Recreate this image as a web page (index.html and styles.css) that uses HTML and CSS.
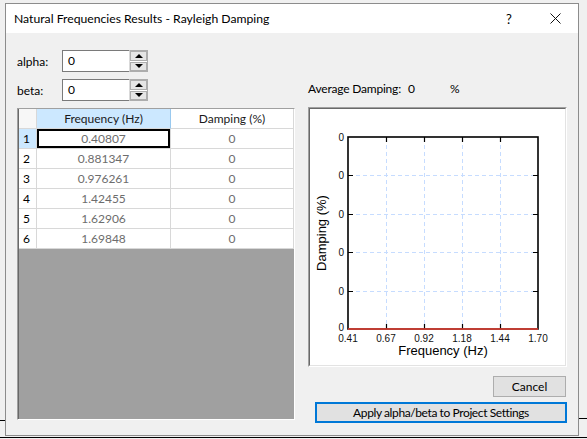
FILE: index.html
```html
<!DOCTYPE html>
<html lang="en">
<head>
  <meta charset="UTF-8">
  <title>Natural Frequencies Results - Rayleigh Damping</title>
  <link rel="stylesheet" href="styles.css">
</head>
<body>

  <div class="window">
    <!-- Barra de titulo -->
    <div class="titlebar">
      <span class="title">Natural Frequencies Results - Rayleigh Damping</span>
      <span class="tb-btn">?</span>
      <span class="tb-btn">
        <svg width="11" height="11" viewBox="0 0 11 11"><path d="M0.5 0.5 L10.5 10.5 M10.5 0.5 L0.5 10.5" stroke="#111" stroke-width="1"/></svg>
      </span>
    </div>

    <div class="client">
      <div class="left">
        <div class="field">
          <span class="field-label">alpha:</span>
          <div class="spin">
            <div class="spin-text">0</div>
            <div class="spin-btns">
              <div class="spin-btn"><span class="arrow-up"></span></div>
              <div class="spin-btn"><span class="arrow-down"></span></div>
            </div>
          </div>
        </div>
        <div class="field">
          <span class="field-label">beta:</span>
          <div class="spin">
            <div class="spin-text">0</div>
            <div class="spin-btns">
              <div class="spin-btn"><span class="arrow-up"></span></div>
              <div class="spin-btn"><span class="arrow-down"></span></div>
            </div>
          </div>
        </div>

        <!-- Tabla de resultados -->
        <div class="grid">
          <div class="grid-inner">
            <div class="grid-row head">
              <div class="cell corner"></div>
              <div class="cell head-sel">Frequency (Hz)</div>
              <div class="cell">Damping (%)</div>
            </div>
            <div class="grid-row">
              <div class="cell num num-sel">1</div>
              <div class="cell val current">0.40807</div>
              <div class="cell val">0</div>
            </div>
            <div class="grid-row">
              <div class="cell num">2</div>
              <div class="cell val">0.881347</div>
              <div class="cell val">0</div>
            </div>
            <div class="grid-row">
              <div class="cell num">3</div>
              <div class="cell val">0.976261</div>
              <div class="cell val">0</div>
            </div>
            <div class="grid-row">
              <div class="cell num">4</div>
              <div class="cell val">1.42455</div>
              <div class="cell val">0</div>
            </div>
            <div class="grid-row">
              <div class="cell num">5</div>
              <div class="cell val">1.62906</div>
              <div class="cell val">0</div>
            </div>
            <div class="grid-row">
              <div class="cell num">6</div>
              <div class="cell val">1.69848</div>
              <div class="cell val">0</div>
            </div>
          </div>
        </div>
      </div>

      <div class="right">
        <div class="avg">
          <span class="avg-label">Average Damping:</span>
          <span class="avg-val">0</span>
          <span>%</span>
        </div>

        <!-- Grafico -->
        <div class="chart">
          <div class="chart-inner">
            <svg width="255" height="256" viewBox="0 0 255 256">
              <g stroke="#c6dcff" stroke-width="1" stroke-dasharray="4 3">
                <path d="M76.5 29 V220 M114.5 29 V220 M152.5 29 V220 M190.5 29 V220"/>
                <path d="M39 66.5 H228 M39 105.5 H228 M39 143.5 H228 M39 182.5 H228"/>
              </g>
              <g stroke="#000" stroke-width="1.2">
                <path d="M76.5 28 V33 M114.5 28 V33 M152.5 28 V33 M190.5 28 V33"/>
                <path d="M76.5 220 V215 M114.5 220 V215 M152.5 220 V215 M190.5 220 V215"/>
                <path d="M38 66.5 H43 M38 105.5 H43 M38 143.5 H43 M38 182.5 H43"/>
                <path d="M228 66.5 H223 M228 105.5 H223 M228 143.5 H223 M228 182.5 H223"/>
              </g>
              <rect x="38" y="28" width="190" height="192" fill="none" stroke="#000" stroke-width="1.6"/>
              <path d="M38 220 H228" stroke="#ef4336" stroke-width="1.6"/>
              <g class="tick-label" text-anchor="end">
                <text x="34" y="31.5">0</text>
                <text x="34" y="70">0</text>
                <text x="34" y="108.5">0</text>
                <text x="34" y="147">0</text>
                <text x="34" y="185.5">0</text>
                <text x="34" y="222">0</text>
              </g>
              <g class="tick-label" text-anchor="middle">
                <text x="38" y="233">0.41</text>
                <text x="76" y="233">0.67</text>
                <text x="114" y="233">0.92</text>
                <text x="152" y="233">1.18</text>
                <text x="190" y="233">1.44</text>
                <text x="228" y="233">1.70</text>
              </g>
              <text class="axis-title" x="133" y="246" text-anchor="middle">Frequency (Hz)</text>
              <text class="axis-title" text-anchor="middle" transform="translate(16 124) rotate(-90)">Damping (%)</text>
            </svg>
          </div>
        </div>

        <div class="cancel-row">
          <button class="btn">Cancel</button>
        </div>
        <button class="btn btn-default">Apply alpha/beta to Project Settings</button>
      </div>
    </div>
  </div>

</body>
</html>
```

FILE: styles.css
```css
body {
  margin: 0;
  padding: 3px 0 0 5px;
  font-family: Lato, "Liberation Sans", sans-serif;
  font-size: 12px;
  color: #000;
  background-color: #f0f0f0;
  /* lineas de la ventana de fondo */
  background-image:
    linear-gradient(#000, #000),
    linear-gradient(#000, #000),
    linear-gradient(#000, #000);
  background-size: 100% 1px, 9px 1px, 5px 1px;
  background-position: 0 437px, 578px 418px, 0 420px;
  background-repeat: no-repeat;
  height: 436px;
  overflow: hidden;
}

.window {
  width: 574px;
  height: 433px;
  box-sizing: border-box;
  border: 1px solid #8c8c8c;
  background: #f0f0f0;
  display: flex;
  flex-direction: column;
}

.titlebar {
  height: 29px;
  background: #fff;
  display: flex;
  align-items: center;
}

.title {
  flex: 1;
  padding-left: 8px;
  font-size: 12.2px;
  color: #000;
  white-space: nowrap;
}

.tb-btn {
  width: 46px;
  height: 29px;
  display: flex;
  align-items: center;
  justify-content: center;
  font-size: 13px;
}

.client {
  flex: 1;
  display: flex;
  padding: 17px 0 0 11px;
}

.left {
  width: 278px;
}

.field {
  display: flex;
  align-items: center;
  height: 22px;
  margin-bottom: 7px;
}

.field-label {
  width: 45px;
}

.spin {
  display: flex;
  width: 86px;
  height: 22px;
}

.spin-text {
  flex: 1;
  background: #fff;
  border: 1px solid #7a7a7a;
  border-right: none;
  padding-left: 5px;
  line-height: 20px;
}

.spin-btns {
  width: 17px;
  display: flex;
  flex-direction: column;
  gap: 1px;
  background: #fff;
  border: 1px solid #adadad;
  border-left: 1px solid #d9d9d9;
}

.spin-btn {
  flex: 1;
  background: #e5e5e5;
  border: 1px solid #adadad;
  display: flex;
  align-items: center;
  justify-content: center;
}

.arrow-up,
.arrow-down {
  width: 0;
  height: 0;
  border-left: 4px solid transparent;
  border-right: 4px solid transparent;
}

.arrow-up {
  border-bottom: 4px solid #000;
}

.arrow-down {
  border-top: 4px solid #000;
}

/* Tabla */
.grid {
  height: 312px;
  box-sizing: border-box;
  border: 1px solid;
  border-color: #a0a0a0 #fff #fff #a0a0a0;
}

.grid-inner {
  height: 100%;
  box-sizing: border-box;
  border-left: 1px solid #696969;
  background: #a0a0a0;
}

.grid-row {
  display: grid;
  grid-template-columns: 18px 134px 123px;
  height: 20px;
}

.cell {
  box-sizing: border-box;
  background: #fff;
  border-right: 1px solid #d8d8d8;
  border-bottom: 1px solid #d8d8d8;
  text-align: center;
  line-height: 19px;
  color: #000;
  white-space: nowrap;
}

.head .cell {
  color: #1a1a1a;
}

.corner {
  background: #f7f7f7;
}

.head-sel {
  background: #cce8ff;
  border-right-color: #99c9ef;
}

.num {
  text-align: left;
  padding-left: 4px;
}

.num-sel {
  background: #cce8ff;
}

.val {
  color: #6d6d6d;
}

.current {
  box-shadow: inset 0 0 0 2px #000;
}

/* Panel derecho */
.right {
  width: 259px;
  margin-left: 13px;
  padding-top: 28px;
}

.avg {
  display: flex;
  height: 20px;
  align-items: center;
  white-space: nowrap;
}

.avg-label {
  width: 100px;
  flex-shrink: 0;
  letter-spacing: -0.2px;
}

.avg-val {
  width: 42px;
  flex-shrink: 0;
}

.chart {
  margin-top: 9px;
  width: 259px;
  height: 260px;
  box-sizing: border-box;
  border: 1px solid;
  border-color: #a0a0a0 #fff #fff #a0a0a0;
}

.chart-inner {
  height: 100%;
  box-sizing: border-box;
  border: 1px solid;
  border-color: #696969 #e3e3e3 #e3e3e3 #696969;
  background: #fff;
}

.chart-inner svg {
  display: block;
}

.tick-label {
  font-family: "Liberation Sans", sans-serif;
  font-size: 10px;
  fill: #111;
}

.axis-title {
  font-family: "Liberation Sans", sans-serif;
  font-size: 13px;
  fill: #000;
}

.cancel-row {
  display: flex;
  justify-content: flex-end;
  padding-right: 1px;
  margin-top: 9px;
}

.btn {
  font-family: Lato, "Liberation Sans", sans-serif;
  font-size: 12px;
  color: #000;
  background: #e1e1e1;
  border: 1px solid #adadad;
  height: 21px;
  width: 73px;
  padding: 0;
  margin: 0;
  cursor: pointer;
}

.btn:hover {
  background: #e5f1fb;
  border-color: #0078d7;
}

.btn-default {
  display: block;
  width: 252px;
  margin: 5px 0 0 7px;
  border: 2px solid #0078d7;
  letter-spacing: -0.4px;
}
```
